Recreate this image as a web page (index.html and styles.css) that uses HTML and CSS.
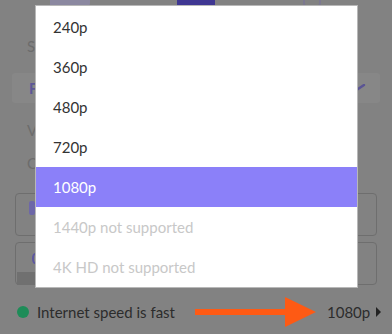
FILE: index.html
```html
<!DOCTYPE html>
<html>
<head>
<meta charset="utf-8">
<link rel="stylesheet" href="styles.css">
</head>
<body>
<div class="page">
  <div class="tabs">
    <span class="tab tab-a"></span>
    <span class="tab tab-b"></span>
    <span class="tab tab-c"></span>
  </div>
  <div class="label">S</div>
  <div class="select-row"><span class="sel-letter">F</span><svg class="chev" width="12" height="8" viewBox="0 0 12 8"><path d="M1 7 L10 1" stroke="#5a5494" stroke-width="2.4" fill="none" stroke-linecap="round"/></svg></div>
  <div class="label l2">V</div>
  <div class="label l3">C</div>
  <div class="box box1"><span class="sq"></span></div>
  <div class="box box2"><span class="ring"></span><span class="bar"></span></div>
  <div class="status">
    <span class="dot"></span>
    <span class="status-text">Internet speed is fast</span>
    <svg class="arrow" width="122" height="32" viewBox="0 0 122 32"><path d="M0 13 H90 V1 L121 16 L90 31 V19 H0 Z" fill="#fe5a14"/></svg>
    <span class="res">1080p</span>
    <svg class="tri" width="6" height="10" viewBox="0 0 6 10"><path d="M0 0 L5 5 L0 10 Z" fill="#222"/></svg>
  </div>
</div>
<ul class="menu">
  <li class="item">240p</li>
  <li class="item">360p</li>
  <li class="item">480p</li>
  <li class="item">720p</li>
  <li class="item active">1080p</li>
  <li class="item disabled">1440p not supported</li>
  <li class="item disabled">4K HD not supported</li>
</ul>
</body>
</html>
```
FILE: styles.css
```css
* { box-sizing: border-box; }
html, body { margin: 0; padding: 0; }
body {
  width: 392px;
  height: 334px;
  background: #828282;
  font-family: Lato, "Noto Sans", sans-serif;
  overflow: hidden;
  position: relative;
}
.page {
  display: flex;
  flex-direction: column;
  padding: 0 15px 0 15px;
}
.tabs {
  height: 10px;
  position: relative;
  display: flex;
}
.tab { display: block; height: 9px; }
.tab-a { width: 40px; margin-left: 35px; background: #8b88a0; border-radius: 0 0 6px 0; }
.tab-b { width: 38px; margin-left: 87px; background: #3f3792; }
.tab-c { width: 18px; height: 12px; margin-left: 88px; border: 2px solid #7c7890; border-top: none; border-radius: 0 0 9px 9px; }
.label {
  color: #6c6c6c;
  font-size: 15px;
  padding-left: 12px;
  margin-top: 27px;
  line-height: 18px;
}
.select-row {
  margin: 18px -3px 0 -3px;
  height: 30px;
  background: #878787;
  border-radius: 3px;
  display: flex;
  align-items: center;
  justify-content: space-between;
  padding: 0 14px 0 17px;
}
.sel-letter { color: #5d5797; font-size: 15px; font-weight: 700; }
.label.l2 { margin-top: 18px; }
.label.l3 { margin-top: 15px; }
.box {
  border: 1px solid #6e6e6e;
  border-radius: 4px;
  height: 43px;
  position: relative;
  display: flex;
  align-items: center;
}
.box1 { margin-top: 21px; }
.box2 { margin-top: 6px; }
.sq { width: 6px; height: 14px; background: #6d67a8; border-radius: 2px; margin-left: 13px; margin-top: -14px; }
.ring { width: 6px; height: 11px; border: 2px solid #5d57a0; border-radius: 50%; margin-left: 16px; margin-top: -10px; }
.bar { position: absolute; left: 1px; bottom: -1px; width: 20px; height: 13px; background: #707070; }
.status {
  display: flex;
  align-items: center;
  height: 32px;
  margin-top: 11px;
  padding-left: 2px;
  white-space: nowrap;
}
.status > * { flex-shrink: 0; }
.dot { width: 12px; height: 12px; border-radius: 50%; background: #1e8c58; }
.status-text { margin-left: 8px; font-size: 15px; color: #2c2c2c; width: 150px; }
.arrow { margin-left: 8px; }
.res { margin-left: 10px; font-size: 15px; color: #2c2c2c; }
.tri { margin-left: 6px; }
.menu {
  position: absolute;
  left: 36px;
  top: 6px;
  width: 321px;
  margin: 0;
  padding: 1px 0 0 0;
  list-style: none;
  background: #fff;
  box-shadow: 0 0 0 1px #b8b8b8;
}
.item {
  height: 40px;
  line-height: 40px;
  padding-left: 17px;
  font-size: 15px;
  color: #333;
}
.item.active { background: #8b80f9; color: #fff; }
.item.disabled { color: #c8c8c8; }
```
